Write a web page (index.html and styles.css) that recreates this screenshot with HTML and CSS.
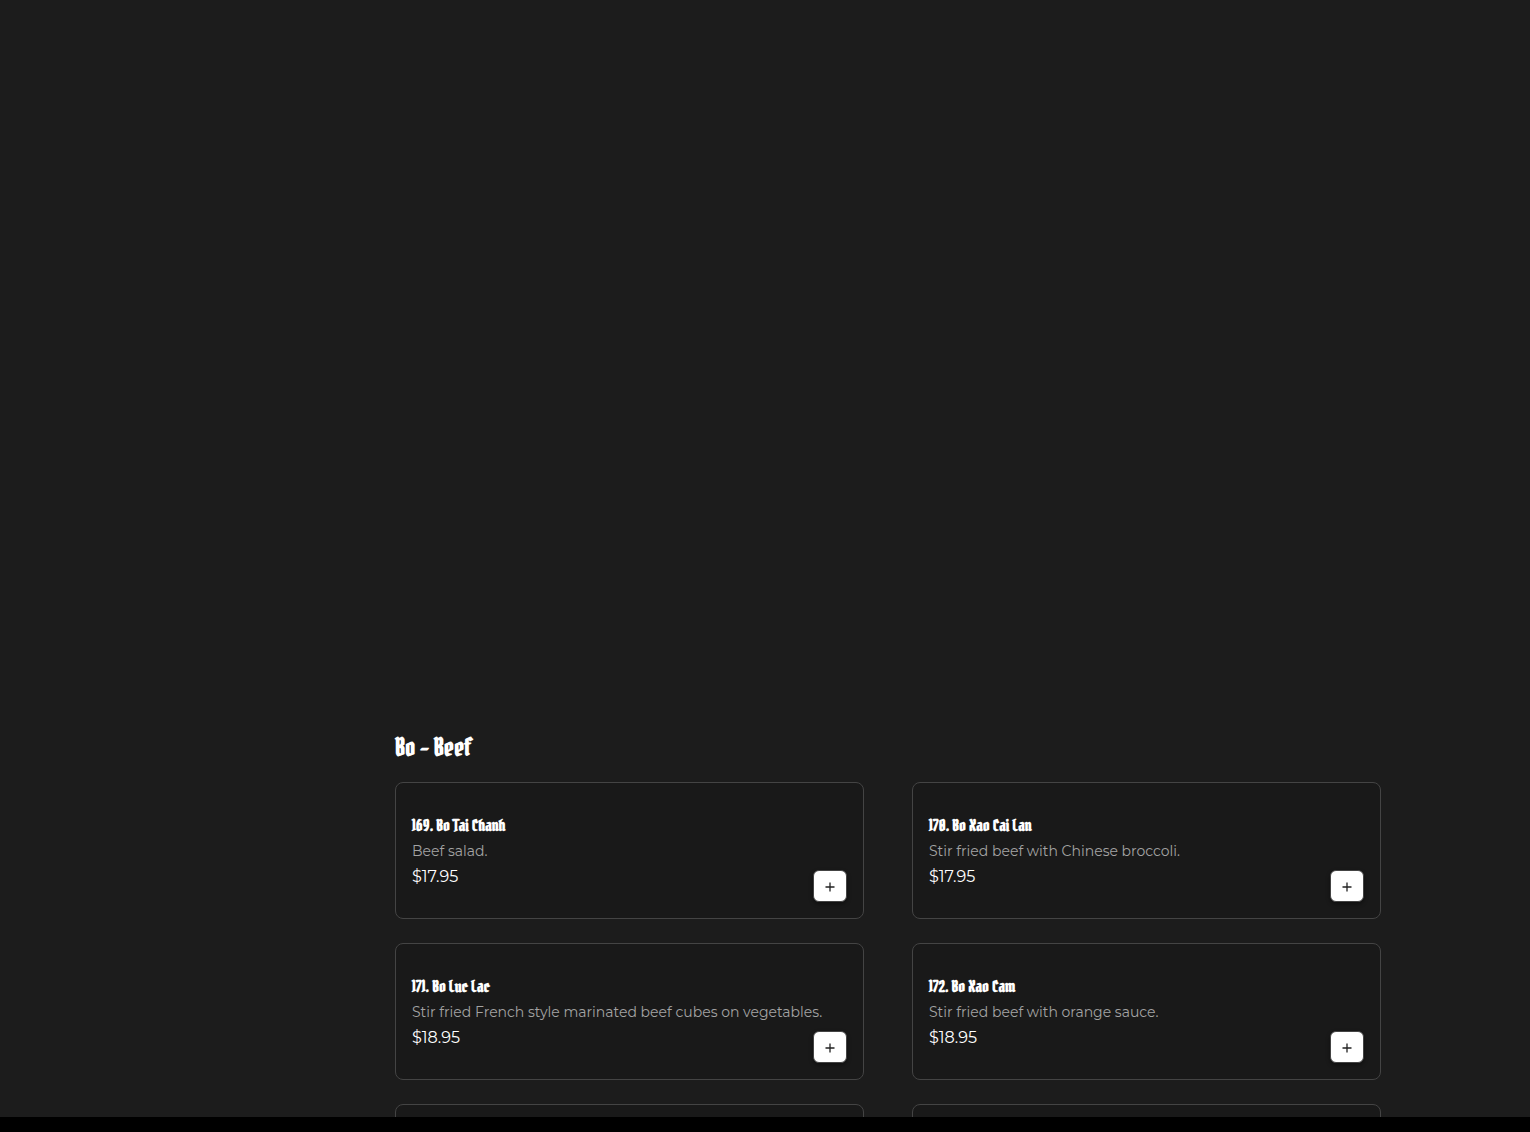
FILE: index.html
```html
<!DOCTYPE html>
<html lang="en">
<head>
<meta charset="UTF-8">
<meta name="viewport" content="width=device-width, initial-scale=1.0">
<title>Menu</title>
<link rel="stylesheet" href="styles.css">
</head>
<body>
<main class="page">
    <section class="menu-section">
        <h2 class="section-title">Bo - Beef</h2>
        <div class="menu-grid">
            <article class="card">
                <div class="info">
                    <h3 class="name">169. Bo Tai Chanh</h3>
                    <p class="description">Beef salad.</p>
                    <p class="price">$17.95</p>
                </div>
                <button class="add-btn" aria-label="Add">
                    <svg width="16" height="16" viewBox="0 0 16 16"><path d="M8 4.5v9M3.5 9h9"/></svg>
                </button>
            </article>
            <article class="card">
                <div class="info">
                    <h3 class="name">170. Bo Xao Cai Lan</h3>
                    <p class="description">Stir fried beef with Chinese broccoli.</p>
                    <p class="price">$17.95</p>
                </div>
                <button class="add-btn" aria-label="Add">
                    <svg width="16" height="16" viewBox="0 0 16 16"><path d="M8 4.5v9M3.5 9h9"/></svg>
                </button>
            </article>
            <article class="card">
                <div class="info">
                    <h3 class="name">171. Bo Luc Lac</h3>
                    <p class="description">Stir fried French style marinated beef cubes on vegetables.</p>
                    <p class="price">$18.95</p>
                </div>
                <button class="add-btn" aria-label="Add">
                    <svg width="16" height="16" viewBox="0 0 16 16"><path d="M8 4.5v9M3.5 9h9"/></svg>
                </button>
            </article>
            <article class="card">
                <div class="info">
                    <h3 class="name">172. Bo Xao Cam</h3>
                    <p class="description">Stir fried beef with orange sauce.</p>
                    <p class="price">$18.95</p>
                </div>
                <button class="add-btn" aria-label="Add">
                    <svg width="16" height="16" viewBox="0 0 16 16"><path d="M8 4.5v9M3.5 9h9"/></svg>
                </button>
            </article>
            <article class="card"></article>
            <article class="card"></article>
        </div>
    </section>
</main>
</body>
</html>
```
FILE: styles.css
```css
* {
    box-sizing: border-box;
}

body {
    margin: 0;
    height: 1132px;
    overflow: hidden;
    background: #000;
    color: #fff;
    font-family: Montserrat, Inter, "Open Sans", sans-serif;
}

.page {
    height: 1117px;
    padding: 732px 149px 0 395px;
    overflow: hidden;
    background: #1c1c1c;
}

h2, h3, p {
    margin: 0;
}

.section-title,
.name {
    font-family: "Pirata One", "Liberation Serif", serif;
    font-weight: 700;
    white-space: nowrap;
}

.section-title {
    height: 50px;
    font-size: 24px;
    line-height: 32px;
}

.menu-grid {
    display: grid;
    grid-template-columns: 1fr 1fr;
    gap: 24px 48px;
}

.card {
    display: flex;
    justify-content: space-between;
    height: 137px;
    padding: 16px;
    background: #191919;
    border: 1px solid #444;
    border-radius: 8px;
}

.info {
    width: 0;
    padding-top: 16px;
    white-space: nowrap;
}

.name {
    font-size: 16px;
    line-height: 20px;
}

.description {
    margin-top: 6px;
    color: #a3a3a3;
    font-size: 14px;
    line-height: 21px;
}

.price {
    margin-top: 3px;
    font-size: 16px;
    line-height: 24px;
}

.add-btn {
    display: flex;
    align-items: center;
    justify-content: center;
    align-self: flex-end;
    width: 34px;
    height: 32px;
    padding: 0;
    background: #fff;
    border: 1px solid #444;
    border-radius: 6px;
    box-shadow: 0 2px 4px rgba(0, 0, 0, 0.4);
    cursor: pointer;
}

.add-btn svg {
    fill: none;
    stroke: #222;
    stroke-width: 1.3;
}
```
